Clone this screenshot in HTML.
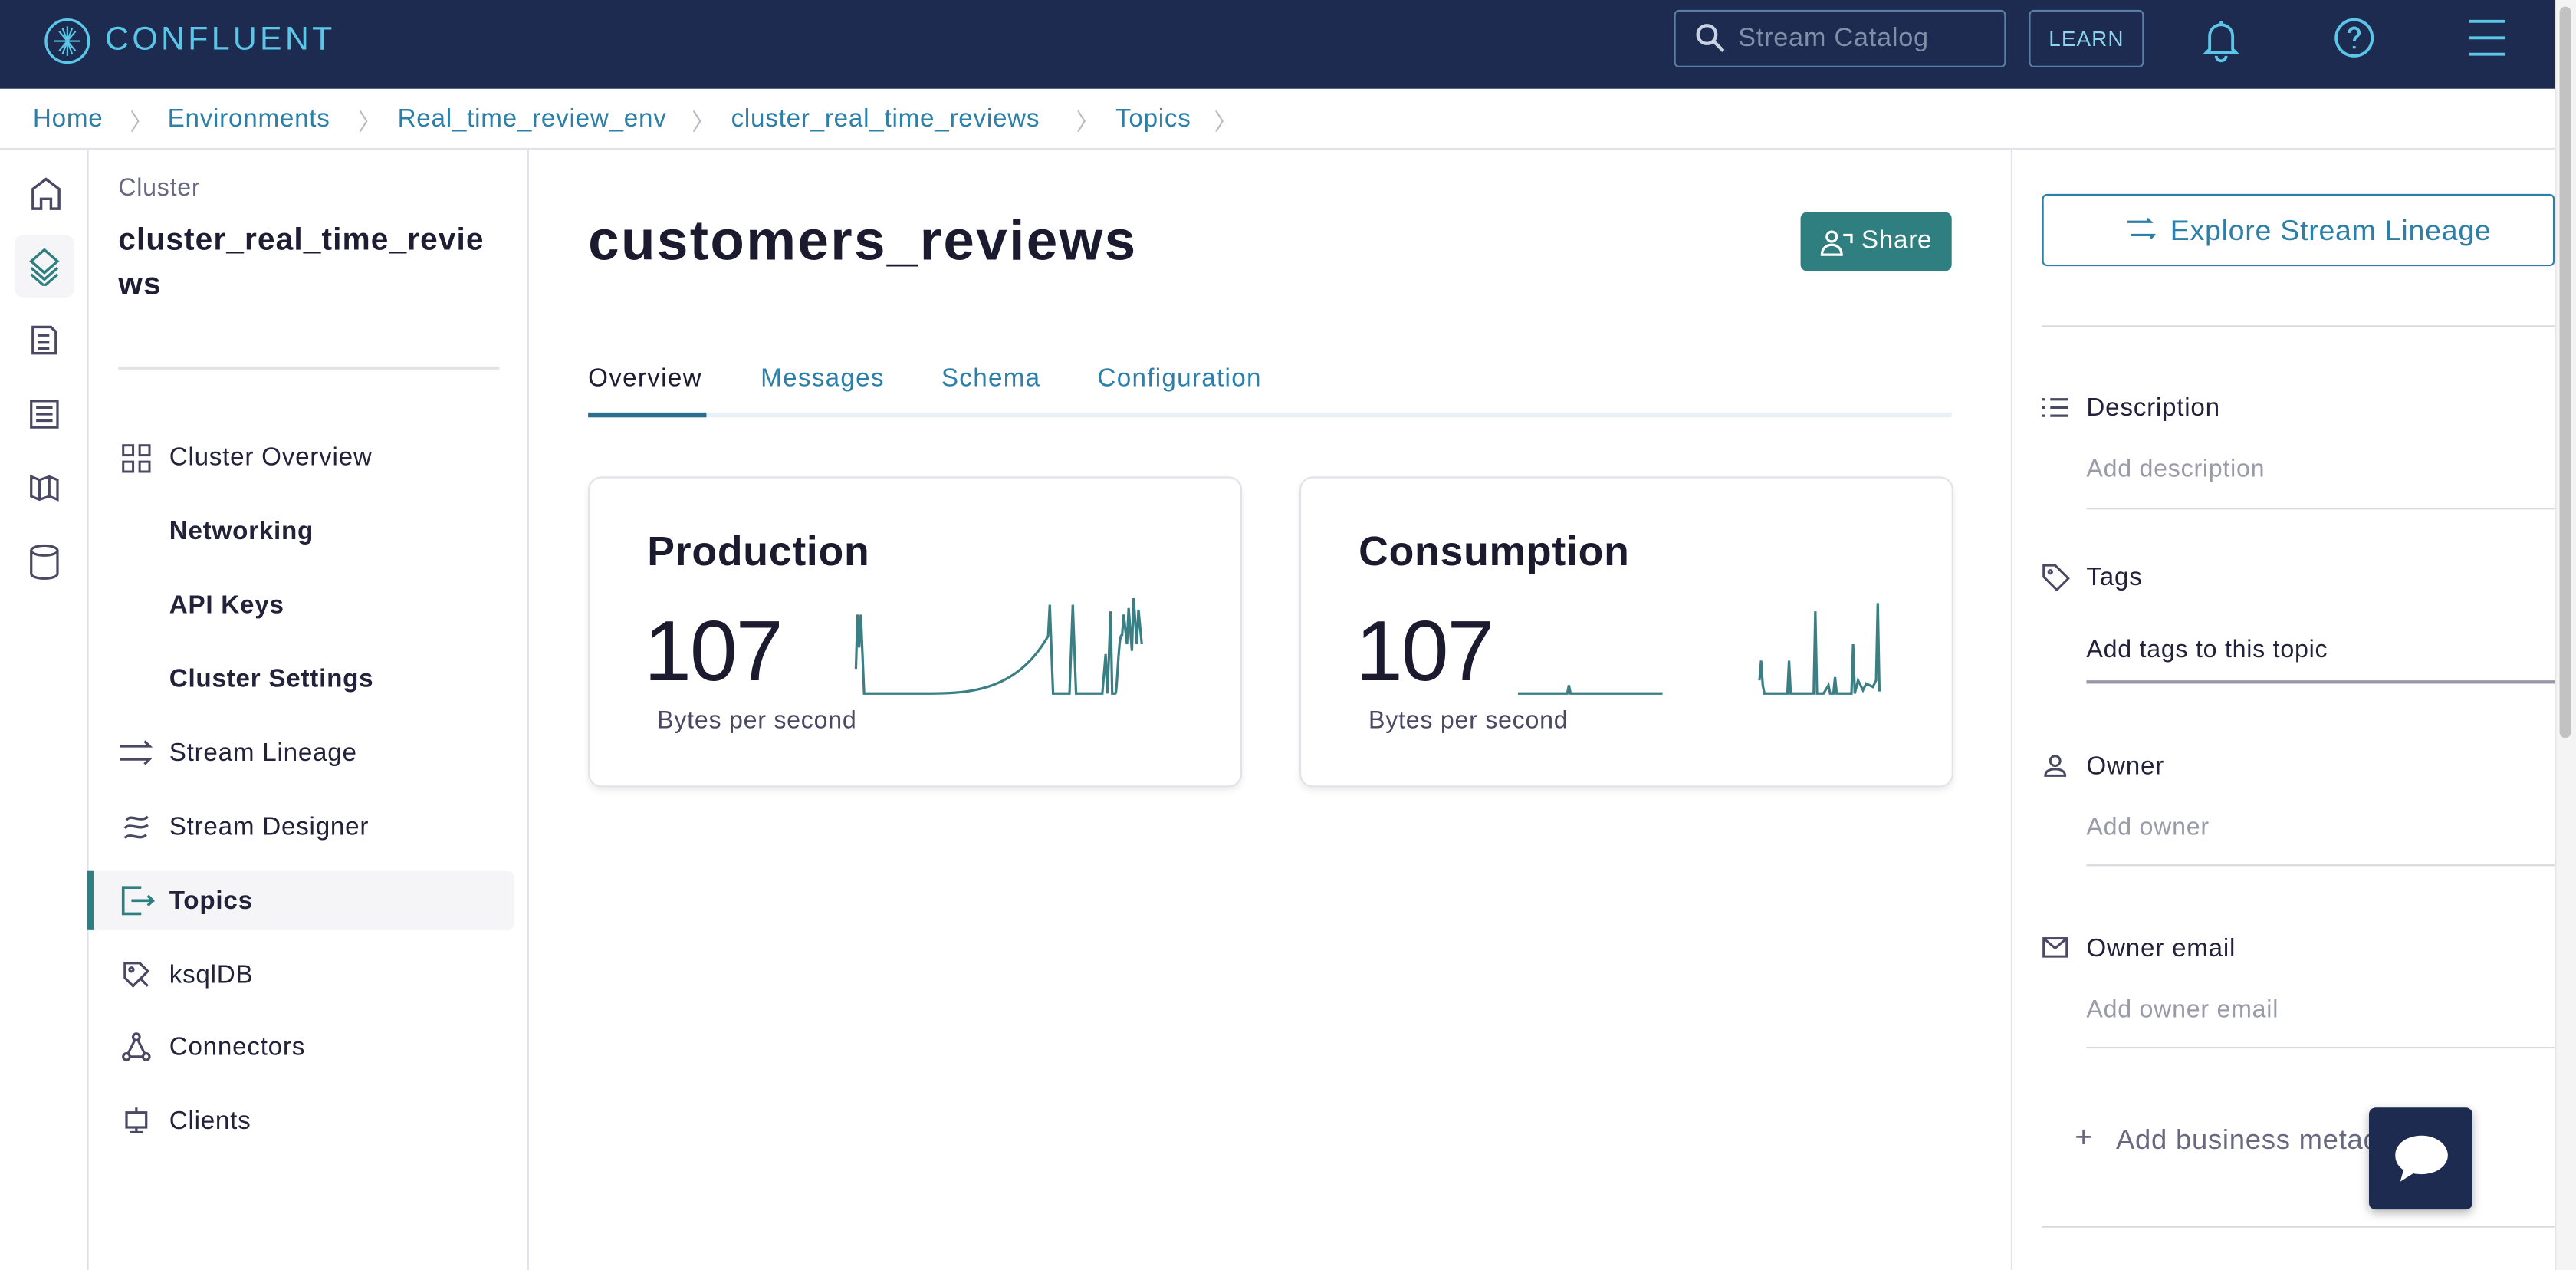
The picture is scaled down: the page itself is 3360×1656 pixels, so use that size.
<!DOCTYPE html>
<html><head><meta charset="utf-8"><style>
*{box-sizing:border-box;margin:0;padding:0}
html,body{width:3360px;height:1656px;overflow:hidden;background:#fff}
#w{width:1568px;height:773px;transform:scale(2.142857);transform-origin:0 0;position:relative;font-family:"Liberation Sans",sans-serif;color:#1f1d33;letter-spacing:.35px}
.a{position:absolute}
.top{left:0;top:0;width:1568px;height:54px;background:#1c2b4f}
.bc{top:64px;font-size:15.5px;color:#2c7fa8}
.chev{color:#b8b8c4;font-size:14px}
.nav{font-size:15.5px;color:#24223a}
.navb{font-weight:bold}
.tab{top:222px;font-size:15.5px;color:#2c7fa8;letter-spacing:.6px}
.card{background:#fff;border:1px solid #e2e2e8;border-radius:8px;box-shadow:0 2px 4px rgba(0,0,0,.08)}
.lbl{font-size:15.5px;color:#24223a}
.ph{font-size:15px;color:#9a9aa8}
.ln{height:1px;background:#d8d8de}
svg{position:absolute}
</style></head><body><div id="w">
<div class="a top"></div>
<svg style="left:26px;top:10px" width="30" height="30" viewBox="0 0 30 30" fill="none" stroke="#5cc6e8" stroke-width="1.6"><circle cx="15" cy="15" r="13"/><path d="M15 6v18M7 15h16M10 9l10 12M20 9L10 21M12 7l6 16M18 7l-6 16" stroke-width="1"/></svg>
<div class="a" style="left:64px;top:13px;font-size:20px;letter-spacing:2px;color:#5cc6e8">CONFLUENT</div>
<div class="a" style="left:1019px;top:6px;width:202px;height:35px;border:1px solid #5a7ea8;border-radius:3px"></div>
<svg style="left:1032px;top:14px" width="18" height="18" viewBox="0 0 18 18" fill="none" stroke="#c8d2e0" stroke-width="2"><circle cx="7" cy="7" r="5.5"/><path d="M11 11l6 6"/></svg>
<div class="a" style="left:1058px;top:15px;font-size:16px;color:#7f8fa8">Stream Catalog</div>
<div class="a" style="left:1235px;top:6px;width:70px;height:35px;border:1px solid #5a7ea8;border-radius:3px;color:#8fd3ee;font-size:13px;text-align:center;line-height:33px;letter-spacing:.5px">LEARN</div>
<svg style="left:1338px;top:10px" width="28" height="28" viewBox="0 0 28 28" fill="none" stroke="#5cc6e8" stroke-width="1.8"><path d="M7 20V12a7 7 0 0114 0v8l2 2H5zM11 24a3 3 0 006 0M14 3v2"/></svg>
<svg style="left:1420px;top:10px" width="26" height="26" viewBox="0 0 26 26" fill="none" stroke="#5cc6e8" stroke-width="1.8"><circle cx="13" cy="13" r="11"/><path d="M10 10a3 3 0 116 0c0 2-3 2.5-3 5M13 18v1.5"/></svg>
<svg style="left:1502px;top:11px" width="24" height="24" viewBox="0 0 24 24" stroke="#5cc6e8" stroke-width="1.8"><path d="M1 2h22M1 12h22M1 22h22"/></svg>
<div class="a" style="left:1555px;top:0;width:13px;height:773px;background:#f4f4f4;border-left:1px solid #e6e6e6"></div>
<div class="a" style="left:1558px;top:4px;width:7px;height:445px;background:#c2c2c2;border-radius:4px"></div>

<div class="a bc" style="left:20px">Home</div><div class="a bc chev" style="left:79px">〉</div>
<div class="a bc" style="left:102px">Environments</div><div class="a bc chev" style="left:218px">〉</div>
<div class="a bc" style="left:242px">Real_time_review_env</div><div class="a bc chev" style="left:421px">〉</div>
<div class="a bc" style="left:445px">cluster_real_time_reviews</div><div class="a bc chev" style="left:655px">〉</div>
<div class="a bc" style="left:679px">Topics</div><div class="a bc chev" style="left:739px">〉</div>
<div class="a ln" style="left:0;top:90px;width:1555px;background:#e2e2e8"></div>
<div class="a" style="left:53px;top:91px;width:1px;height:682px;background:#e2e2e8"></div>
<div class="a" style="left:321px;top:91px;width:1px;height:682px;background:#e2e2e8"></div>
<div class="a" style="left:1224px;top:91px;width:1px;height:682px;background:#e2e2e8"></div>

<svg style="left:18px;top:107px" width="20" height="22" viewBox="0 0 20 22" fill="none" stroke="#4a4862" stroke-width="1.6"><path d="M2 20V8l8-6 8 6v12h-5v-6h-6v6z"/></svg>
<div class="a" style="left:9px;top:143px;width:36px;height:38px;background:#f5f5f8;border-radius:5px"></div>
<svg style="left:16px;top:150px" width="22" height="24" viewBox="0 0 22 24" fill="none" stroke="#2f7f80" stroke-width="1.6"><path d="M11 2l8 7-8 7-8-7zM3 13l8 7 8-7M3 17l8 7 8-7"/></svg>
<svg style="left:19px;top:198px" width="16" height="18" viewBox="0 0 16 18" fill="none" stroke="#4a4862" stroke-width="1.6"><path d="M1 1h11l3 3v13H1zM4 6h7M4 10h7M4 14h7"/></svg>
<svg style="left:18px;top:243px" width="18" height="18" viewBox="0 0 18 18" fill="none" stroke="#4a4862" stroke-width="1.5"><rect x="1" y="1" width="16" height="16"/><path d="M4 5h10M4 9h10M4 13h10"/></svg>
<svg style="left:18px;top:288px" width="18" height="18" viewBox="0 0 18 18" fill="none" stroke="#4a4862" stroke-width="1.5"><path d="M1 2l5 2 6-2 5 2v12l-5-2-6 2-5-2zM6 4v12M12 2v12"/></svg>
<svg style="left:18px;top:331px" width="18" height="22" viewBox="0 0 18 22" fill="none" stroke="#4a4862" stroke-width="1.5"><ellipse cx="9" cy="4" rx="8" ry="3"/><path d="M1 4v14c0 2 4 3 8 3s8-1 8-3V4"/></svg>

<div class="a" style="left:72px;top:106px;font-size:15px;color:#6a6880">Cluster</div>
<div class="a" style="left:72px;top:133px;font-size:19px;font-weight:bold;line-height:27px;width:245px;color:#1f1d33;letter-spacing:.5px">cluster_real_time_revie<br>ws</div>
<div class="a" style="left:72px;top:223px;width:232px;height:2px;background:#e2e2e8"></div>
<svg style="left:74px;top:270px" width="18" height="18" viewBox="0 0 18 18" fill="none" stroke="#4a4862" stroke-width="1.4"><rect x="1" y="1" width="6" height="6"/><rect x="11" y="1" width="6" height="6"/><rect x="1" y="11" width="6" height="6"/><rect x="11" y="11" width="6" height="6"/></svg>
<div class="a nav" style="left:103px;top:270px">Cluster Overview</div>
<div class="a nav navb" style="left:103px;top:315px">Networking</div>
<div class="a nav navb" style="left:103px;top:360px">API Keys</div>
<div class="a nav navb" style="left:103px;top:405px">Cluster Settings</div>
<svg style="left:72px;top:450px" width="22" height="16" viewBox="0 0 22 16" fill="none" stroke="#4a4862" stroke-width="1.6"><path d="M1 4h18l-3-3M1 12h18l-3 3"/></svg>
<div class="a nav" style="left:103px;top:450px">Stream Lineage</div>
<svg style="left:74px;top:494px" width="18" height="18" viewBox="0 0 18 18" fill="none" stroke="#4a4862" stroke-width="1.6"><path d="M3 5c3-4 8 2 13-2M2 10c3-4 9 2 14-2M2 16c3-4 9 2 13-2"/></svg>
<div class="a nav" style="left:103px;top:495px">Stream Designer</div>
<div class="a" style="left:53px;top:530px;width:260px;height:36px;background:#f5f5f8;border-radius:0 4px 4px 0"></div>
<div class="a" style="left:53px;top:530px;width:4px;height:36px;background:#2f7f80"></div>
<svg style="left:74px;top:539px" width="20" height="18" viewBox="0 0 20 18" fill="none" stroke="#2f7f80" stroke-width="1.7"><path d="M12 1H1v16h11M6 9h13l-3-3M16 12l3-3"/></svg>
<div class="a nav navb" style="left:103px;top:540px">Topics</div>
<svg style="left:74px;top:584px" width="18" height="18" viewBox="0 0 18 18" fill="none" stroke="#4a4862" stroke-width="1.5"><path d="M2 2h9l5 5-9 9-5-5zM16 16l-4-4"/><circle cx="6" cy="6" r="1.2"/></svg>
<div class="a nav" style="left:103px;top:585px">ksqlDB</div>
<svg style="left:74px;top:628px" width="18" height="18" viewBox="0 0 18 18" fill="none" stroke="#4a4862" stroke-width="1.5"><circle cx="9" cy="3" r="2"/><circle cx="3" cy="15" r="2"/><circle cx="15" cy="15" r="2"/><path d="M8 5l-4 8M10 5l4 8M5 15h8"/></svg>
<div class="a nav" style="left:103px;top:629px">Connectors</div>
<svg style="left:74px;top:673px" width="18" height="18" viewBox="0 0 18 18" fill="none" stroke="#4a4862" stroke-width="1.5"><rect x="3" y="4" width="12" height="9"/><path d="M9 1v3M5 16h8M9 13v3"/></svg>
<div class="a nav" style="left:103px;top:674px">Clients</div>

<div class="a" style="left:358px;top:128px;font-size:34px;font-weight:bold;color:#1b1a2e;letter-spacing:1.1px">customers_reviews</div>
<div class="a" style="left:1096px;top:129px;width:92px;height:36px;background:#2f7f80;border-radius:4px;color:#fff;font-size:15.5px;line-height:36px;padding-left:37px">Share</div>
<svg style="left:1108px;top:139px" width="20" height="17" viewBox="0 0 20 17" fill="none" stroke="#fff" stroke-width="1.5"><circle cx="7" cy="5" r="3"/><path d="M1 16c0-4 3-6 6-6s6 2 6 6zM14 4h5v5"/></svg>
<div class="a tab" style="left:358px;color:#1f1d33">Overview</div>
<div class="a tab" style="left:463px">Messages</div>
<div class="a tab" style="left:573px">Schema</div>
<div class="a tab" style="left:668px">Configuration</div>
<div class="a" style="left:358px;top:251px;width:830px;height:3px;background:#e8f2f6"></div>
<div class="a" style="left:358px;top:251px;width:72px;height:3px;background:#2c6c8c"></div>

<div class="a card" style="left:358px;top:290px;width:398px;height:189px"></div>
<div class="a" style="left:394px;top:322px;font-size:25px;font-weight:bold;color:#1b1a2e">Production</div>
<div class="a" style="left:392px;top:367px;font-size:52px;color:#1b1a2e;letter-spacing:-1px">107</div>
<div class="a" style="left:400px;top:430px;font-size:15px;color:#4a4862">Bytes per second</div>
<svg style="left:518px;top:362px" width="200" height="70" viewBox="0 0 200 70" fill="none" stroke="#3a7f84" stroke-width="1.5"><path d="M3 45L4 12 5 32 6 12 8 60H43C70 60 100 60 120 25L121 6 123 60H133L135 6 137 60H153L155 36 156 60 157 38 158 10 159 60H161C162 60 163 20 165 25L166 12 168 30 169 8 171 34 172 2 174 30 175 9 177 30"/></svg>
<div class="a card" style="left:791px;top:290px;width:398px;height:189px"></div>
<div class="a" style="left:827px;top:322px;font-size:25px;font-weight:bold;color:#1b1a2e">Consumption</div>
<div class="a" style="left:825px;top:367px;font-size:52px;color:#1b1a2e;letter-spacing:-1px">107</div>
<div class="a" style="left:833px;top:430px;font-size:15px;color:#4a4862">Bytes per second</div>
<svg style="left:920px;top:362px" width="240" height="70" viewBox="0 0 240 70" fill="none" stroke="#3a7f84" stroke-width="1.5"><path d="M4 60H34L35 55 36 60H92M151 52L152 40 153 55 154 60H168L169 40 170 60H184L185 10 186 60H190L193 55 194 60 196 60 197 50 198 60H207L208 30 209 60 211 52 214 58 216 54 220 56 222 52 223 5 224 58 225 58"/></svg>

<div class="a" style="left:1243px;top:118px;width:312px;height:44px;border:1px solid #2c7fa8;border-radius:3px"></div>
<svg style="left:1294px;top:132px" width="18" height="14" viewBox="0 0 18 14" fill="none" stroke="#2c7fa8" stroke-width="1.5"><path d="M1 3h14l-2-2M3 11h14l-2 2"/></svg>
<div class="a" style="left:1321px;top:130px;font-size:17.5px;color:#2c7fa8">Explore Stream Lineage</div>
<div class="a ln" style="left:1243px;top:198px;width:312px"></div>
<svg style="left:1243px;top:241px" width="16" height="14" viewBox="0 0 16 14" stroke="#4a4862" stroke-width="1.5"><path d="M0 2h2M5 2h11M0 7h2M5 7h11M0 12h2M5 12h11"/></svg>
<div class="a lbl" style="left:1270px;top:240px">Description</div>
<div class="a ph" style="left:1270px;top:277px">Add description</div>
<div class="a ln" style="left:1270px;top:309px;width:285px"></div>
<svg style="left:1243px;top:343px" width="17" height="17" viewBox="0 0 17 17" fill="none" stroke="#4a4862" stroke-width="1.4"><path d="M1 1h7l8 8-7 7-8-8z"/><circle cx="5" cy="5" r="1"/></svg>
<div class="a lbl" style="left:1270px;top:343px">Tags</div>
<div class="a" style="left:1270px;top:387px;font-size:15px;color:#24223a">Add tags to this topic</div>
<div class="a" style="left:1270px;top:414px;width:285px;height:2px;background:#9a98a8"></div>
<svg style="left:1244px;top:459px" width="14" height="14" viewBox="0 0 14 14" fill="none" stroke="#4a4862" stroke-width="1.4"><circle cx="7" cy="4" r="3"/><path d="M1 13c0-3 3-4 6-4s6 1 6 4z"/></svg>
<div class="a lbl" style="left:1270px;top:458px">Owner</div>
<div class="a ph" style="left:1270px;top:495px">Add owner</div>
<div class="a ln" style="left:1270px;top:526px;width:285px"></div>
<svg style="left:1243px;top:570px" width="16" height="13" viewBox="0 0 16 13" fill="none" stroke="#4a4862" stroke-width="1.4"><rect x="1" y="1" width="14" height="11"/><path d="M1 1l7 6 7-6"/></svg>
<div class="a lbl" style="left:1270px;top:569px">Owner email</div>
<div class="a ph" style="left:1270px;top:606px">Add owner email</div>
<div class="a ln" style="left:1270px;top:637px;width:285px"></div>
<div class="a" style="left:1263px;top:682px;font-size:18px;color:#6a6880">+</div>
<div class="a" style="left:1288px;top:684px;font-size:17px;color:#6a6880">Add business metadata</div>
<div class="a ln" style="left:1243px;top:746px;width:312px"></div>
<div class="a" style="left:1442px;top:674px;width:63px;height:62px;background:#1c2b4f;border-radius:4px;box-shadow:0 2px 6px rgba(0,0,0,.3)"></div>
<svg style="left:1456px;top:689px" width="36" height="32" viewBox="0 0 36 32"><path d="M18 2C9 2 2 7 2 14c0 4 2 7 5 9l-2 7 8-5c2 .5 3 .5 5 .5 9 0 16-5 16-11.5S27 2 18 2z" fill="#fff"/></svg>
</div></body></html>
